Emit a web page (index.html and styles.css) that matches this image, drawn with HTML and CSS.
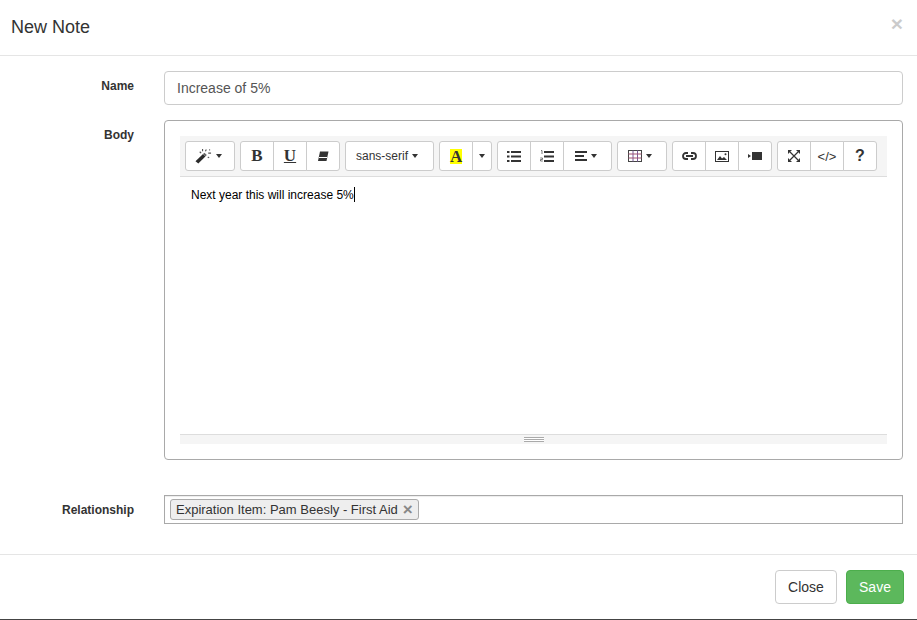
FILE: index.html
```html
<!DOCTYPE html>
<html lang="en">
<head>
<meta charset="utf-8">
<title>New Note</title>
<link rel="stylesheet" href="styles.css">
</head>
<body>
<div class="modal">
  <header class="modal-header">
    <h4 class="modal-title">New Note</h4>
    <span class="close-x">×</span>
  </header>
  <main class="modal-body">
    <div class="form-row row-name">
      <label class="row-label">Name</label>
      <div class="row-field"><div class="text-input">Increase of 5%</div></div>
    </div>
    <div class="form-row row-body">
      <label class="row-label">Body</label>
      <div class="row-field">
        <div class="editor-panel">
          <div class="toolbar">
            <div class="btn-group">
              <button class="tb w50 with-caret"><svg width="17" height="16" viewBox="0 0 18 16"><path d="M0.500 13.500l8-7.500 2.500 2.500-7.500 7.500z" fill="#2b2b2b"/><path d="M8.500 6l1.500-1.500 2.500 2.500-1.500 1.500z" fill="#666"/><path d="M8 0.500v2.500M12 1l-1 2M14 5h3M13.500 9l1.500 1M5 3.500l1.500 1.500M15 1.500h1" stroke="#555" stroke-width="1.200" fill="none"/></svg><span class="caret"></span></button>
            </div>
            <div class="btn-group">
              <button class="tb w33 glyph-serif">B</button>
              <button class="tb w33 glyph-serif under">U</button>
              <button class="tb w33"><svg width="12" height="11" viewBox="0 0 12 11"><path d="M3 0.500h8.500l-2 9.500H1z" fill="#333"/><path d="M2 6.500h8" stroke="#fff" stroke-width="1"/></svg></button>
            </div>
            <div class="btn-group">
              <button class="tb w89 font-btn">sans-serif<span class="caret"></span></button>
            </div>
            <div class="btn-group">
              <button class="tb w33"><span class="color-a">A</span></button>
              <button class="tb w20"><span class="caret solo"></span></button>
            </div>
            <div class="btn-group">
              <button class="tb w33"><svg width="14" height="11" viewBox="0 0 14 11"><path d="M0 0h2.500v2H0zM0 4.500h2.500v2H0zM0 9h2.500v2H0zM4 0h10v2H4zM4 4.500h10v2H4zM4 9h10v2H4z" fill="#333"/></svg></button>
              <button class="tb w33"><svg width="14" height="13" viewBox="0 0 14 13"><path d="M4 1h10v2H4zM4 5.500h10v2H4zM4 10h10v2H4z" fill="#333"/><path d="M1 0.500h1v3.500M0.300 8h2.200v1.500h-2v1.500h2.300" stroke="#555" stroke-width="0.800" fill="none"/></svg></button>
              <button class="tb w49 with-caret"><svg width="12" height="10" viewBox="0 0 12 10"><path d="M0 0h12v2H0zM0 4h9v2H0zM0 8h12v2H0z" fill="#333"/></svg><span class="caret"></span></button>
            </div>
            <div class="btn-group">
              <button class="tb w50 with-caret"><svg width="14" height="12" viewBox="0 0 14 12"><rect x="0.500" y="0.500" width="13" height="11" fill="none" stroke="#444"/><path d="M5 0.500v11M9.500 0.500v11" stroke="#7a5a9a" fill="none"/><path d="M0.500 4h13M0.500 8h13" stroke="#a05070" fill="none"/></svg><span class="caret"></span></button>
            </div>
            <div class="btn-group">
              <button class="tb w33"><svg width="15" height="8" viewBox="0 0 15 8"><path d="M6 1H4a3 3 0 0 0 0 6h2M9 1h2a3 3 0 0 1 0 6H9M4 4h7" stroke="#333" stroke-width="1.800" fill="none"/></svg></button>
              <button class="tb w33"><svg width="14" height="11" viewBox="0 0 14 11"><rect x="0.500" y="0.500" width="13" height="10" fill="none" stroke="#333"/><path d="M2 9l3-4 2 2.500 2-1.500 3 3z" fill="#333"/><circle cx="10.500" cy="3.200" r="1" fill="#333"/></svg></button>
              <button class="tb w33"><svg width="14" height="8" viewBox="0 0 14 8"><path d="M4 0h10v8H4zM0 2l3 2-3 2z" fill="#333"/></svg></button>
            </div>
            <div class="btn-group">
              <button class="tb w33"><svg width="12" height="12" viewBox="0 0 12 12"><path d="M0 0h4L0 4zM12 0v4L8 0zM0 12V8l4 4zM12 12H8l4-4z" fill="#333"/><path d="M2 2l8 8M10 2l-8 8" stroke="#333" stroke-width="1.200"/></svg></button>
              <button class="tb w33 code-btn">&lt;/&gt;</button>
              <button class="tb w33 help-btn">?</button>
            </div>
          </div>
          <div class="editable">Next year this will increase 5%<span class="cursor"></span></div>
          <div class="statusbar"><span class="grip"></span></div>
        </div>
      </div>
    </div>
    <div class="form-row row-rel">
      <label class="row-label">Relationship</label>
      <div class="row-field">
        <div class="tag-input">
          <span class="tag">Expiration Item: Pam Beesly - First Aid<span class="tag-x">×</span></span>
        </div>
      </div>
    </div>
  </main>
  <footer class="modal-footer">
    <button class="act act-close">Close</button>
    <button class="act act-save">Save</button>
  </footer>
</div>
</body>
</html>
```
FILE: styles.css
```css
* { box-sizing: border-box; }
html, body { margin: 0; padding: 0; background: #fff; }
body { font-family: "Liberation Sans", Arial, sans-serif; color: #333; font-size: 14px; }
.modal {
  width: 917px; height: 620px; background: #fff;
  border-bottom: 1px solid #444;
  display: flex; flex-direction: column; overflow: hidden;
}
.modal-header {
  height: 56px; flex: none; border-bottom: 1px solid #e5e5e5;
  display: flex; justify-content: space-between; align-items: flex-start;
  padding: 0 14px 0 11px;
}
.modal-title { margin: 17px 0 0; font-size: 18px; font-weight: 400; line-height: 20px; color: #333; }
.close-x { font-size: 21px; font-weight: 700; line-height: 21px; color: #000; opacity: .2; margin-top: 13px; }
.modal-body { flex: 1; display: flex; flex-direction: column; padding: 15px 14px 0 0; }
.form-row { display: flex; }
.row-label {
  width: 134px; flex: none; text-align: right; font-size: 12px; font-weight: 700;
  line-height: 14px; color: #333; padding-top: 8px;
}
.row-field { flex: 1; margin-left: 30px; }
.row-name { height: 49px; }
.row-body { height: 375px; }
.text-input {
  height: 34px; border: 1px solid #ccc; border-radius: 4px; padding: 6px 12px;
  font-size: 14px; line-height: 20px; color: #555;
}
.editor-panel {
  height: 340px; border: 1px solid #a9a9a9; border-radius: 4px; padding: 15px;
  display: flex; flex-direction: column;
}
.toolbar {
  height: 41px; flex: none; background: #f5f5f5; border-bottom: 1px solid #ddd;
  padding: 5px 0 0 5px; display: flex; gap: 5px;
}
.btn-group { display: flex; height: 30px; }
.tb {
  height: 30px; padding: 0; margin: 0 0 0 -1px; background: #fff; border: 1px solid #ccc;
  display: flex; align-items: center; justify-content: center; gap: 2px;
  font-family: "Liberation Sans", Arial, sans-serif; font-size: 12px; color: #333;
}
.tb:first-child { margin-left: 0; border-radius: 3px 0 0 3px; }
.tb:last-child { border-radius: 0 3px 3px 0; }
.tb:first-child:last-child { border-radius: 3px; }
.w50 { width: 50px; }
.w33 { width: 34px; }
.w20 { width: 20px; }
.w49 { width: 49px; }
.w89 { width: 89px; }
.with-caret { gap: 3px; padding-right: 4px; }
.caret {
  display: inline-block; width: 0; height: 0; margin-left: 1px;
  border-top: 4px solid #333; border-left: 3px solid transparent; border-right: 3px solid transparent;
}
.caret.solo { margin-left: 0; }
.font-btn { gap: 3px; padding-right: 5px; }
.glyph-serif { font-family: "Liberation Serif", serif; font-weight: 700; font-size: 17px; }
.under { text-decoration: underline; }
.color-a {
  background: #ff0; font-family: "Liberation Serif", serif; font-weight: 700; font-size: 17px;
  line-height: 15px; width: 12px; display: block; text-align: center; color: #333;
}
.code-btn { font-size: 13px; }
.help-btn { font-size: 16px; font-weight: 700; }
.editable { flex: 1; padding: 10px 11px; font-size: 12px; line-height: 17px; color: #000; }
.cursor { display: inline-block; width: 1px; height: 15px; background: #000; vertical-align: -3px; }
.statusbar {
  height: 10px; flex: none; background: #f5f5f5; border-top: 1px solid #ddd;
  display: flex; justify-content: center; align-items: flex-start; padding-top: 2px;
}
.grip { width: 20px; height: 5px; border-top: 1px solid #aaa; border-bottom: 1px solid #aaa; background: linear-gradient(#fff 1px, #aaa 1px, #aaa 2px, #fff 2px); }
.row-rel { height: 59px; }
.tag-input {
  height: 29px; border: 1px solid #a9a9a9; padding: 3px 5px;
  box-shadow: inset 0 1px 1px rgba(0,0,0,.075); display: flex;
}
.tag {
  height: 21px; background: #eee; border: 1px solid #aaa; border-radius: 3px;
  padding: 0 5px; line-height: 19px; font-size: 13px; color: #333; display: flex;
}
.tag-x { font-size: 17px; font-weight: 700; color: #888; margin-left: 5px; line-height: 19px; }
.modal-footer {
  height: 65px; flex: none; border-top: 1px solid #e5e5e5; padding: 15px 13px 0 0;
  display: flex; justify-content: flex-end; gap: 9px;
}
.act {
  height: 34px; border-radius: 4px; border: 1px solid #ccc; background: #fff; color: #333;
  font-family: "Liberation Sans", Arial, sans-serif; font-size: 14px; padding: 0 12px;
}
.act-close { width: 62px; }
.act-save { width: 58px; background: #5cb85c; border-color: #4cae4c; color: #fff; }
```
